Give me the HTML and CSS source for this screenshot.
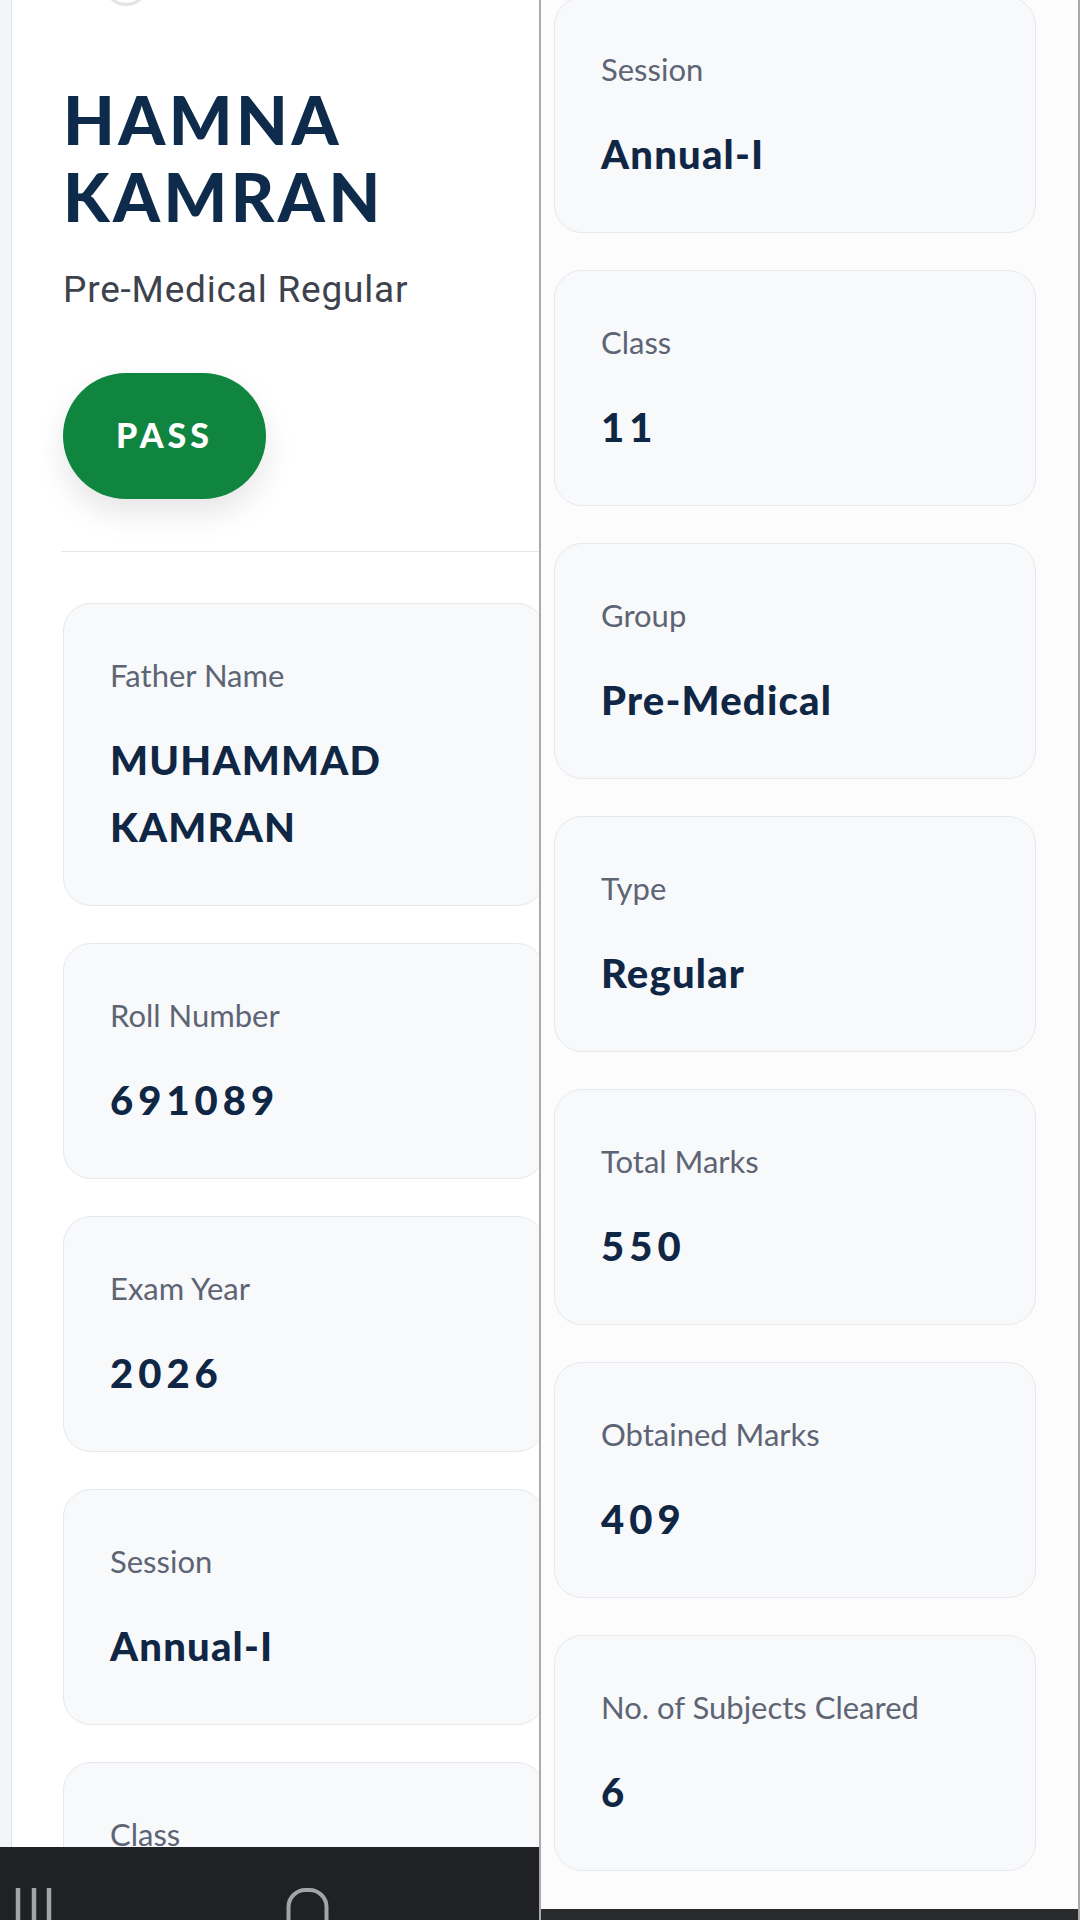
FILE: index.html
```html
<!DOCTYPE html>
<html>
<head>
<meta charset="utf-8">
<link rel="stylesheet" href="styles.css">
</head>
<body>
<div class="screen">
  <section class="left">
    <div class="sheet">
      <div class="avatar"></div>
      <h1 class="name">HAMNA<br>KAMRAN</h1>
      <p class="subtitle">Pre-Medical Regular</p>
      <div class="badge">PASS</div>
      <hr class="rule">
      <div class="cards">
        <div class="card"><div class="label">Father Name</div><div class="value">MUHAMMAD<br>KAMRAN</div></div>
        <div class="card"><div class="label">Roll Number</div><div class="value num">691089</div></div>
        <div class="card"><div class="label">Exam Year</div><div class="value num">2026</div></div>
        <div class="card"><div class="label">Session</div><div class="value">Annual-I</div></div>
        <div class="card"><div class="label">Class</div><div class="value num">11</div></div>
      </div>
    </div>
    <div class="navbar">
      <svg class="nav-recent" width="40" height="40" viewBox="0 0 40 40"><g stroke="#a3a4a6" stroke-width="4.5" fill="none"><line x1="3" y1="0" x2="3" y2="40"/><line x1="19" y1="0" x2="19" y2="40"/><line x1="34" y1="0" x2="34" y2="40"/></g></svg>
      <svg class="nav-home" width="44" height="40" viewBox="0 0 44 40"><rect x="2.5" y="2" width="38" height="50" rx="17" stroke="#a3a4a6" stroke-width="4" fill="none"/></svg>
    </div>
  </section>
  <section class="right">
    <div class="cards cards-right">
      <div class="card"><div class="label">Session</div><div class="value">Annual-I</div></div>
      <div class="card"><div class="label">Class</div><div class="value num">11</div></div>
      <div class="card"><div class="label">Group</div><div class="value">Pre-Medical</div></div>
      <div class="card"><div class="label">Type</div><div class="value">Regular</div></div>
      <div class="card"><div class="label">Total Marks</div><div class="value num">550</div></div>
      <div class="card"><div class="label">Obtained Marks</div><div class="value num">409</div></div>
      <div class="card"><div class="label">No. of Subjects Cleared</div><div class="value num">6</div></div>
    </div>
    <div class="rbar"></div>
  </section>
</div>
</body>
</html>
```
FILE: styles.css
```css
html, body {
  margin: 0;
  padding: 0;
  width: 1080px;
  height: 1920px;
  overflow: hidden;
  background: #ffffff;
}
.screen {
  display: flex;
  width: 1080px;
  height: 1920px;
}
.left {
  position: relative;
  width: 539px;
  height: 1920px;
  overflow: hidden;
  background: #f3f5f6;
  padding-left: 11px;
  box-sizing: border-box;
}
.sheet {
  background: #ffffff;
  border-left: 1px solid #dde6e6;
  height: 100%;
  padding-left: 51px;
  box-sizing: border-box;
}
.avatar {
  width: 40px;
  height: 40px;
  border-radius: 50%;
  border: 3px solid #e3e4e6;
  margin: -40px 0 0 40px;
}
.name {
  margin: 75px 0 0 0;
  font-family: "Lato", sans-serif;
  font-weight: 900;
  font-size: 67px;
  line-height: 77px;
  letter-spacing: 3.5px;
  color: #0f2b4c;
}
.subtitle {
  margin: 33px 0 0 0;
  font-family: "Roboto", sans-serif;
  font-size: 37px;
  line-height: 43px;
  letter-spacing: 0.8px;
  color: #3d424d;
}
.badge {
  margin-top: 62px;
  width: 203px;
  height: 126px;
  border-radius: 63px;
  background: #0f8540;
  box-shadow: 0 14px 30px rgba(0, 0, 0, 0.10);
  display: flex;
  align-items: center;
  justify-content: center;
  font-family: "Lato", sans-serif;
  font-weight: 900;
  font-size: 34px;
  letter-spacing: 4px;
  color: #ffffff;
  padding-bottom: 4px;
  box-sizing: border-box;
}
.rule {
  margin: 52px 0 0 -2px;
  border: 0;
  border-top: 1px solid #e4e6ea;
  height: 0;
}
.cards {
  display: flex;
  flex-direction: column;
  gap: 37px;
  margin-top: 51px;
  width: 482px;
}
.card {
  background: #f8f9fb;
  border: 1px solid #e6e8ec;
  border-radius: 28px;
  padding: 52px 46px 44px 46px;
  box-sizing: border-box;
}
.label {
  font-family: "Lato", sans-serif;
  font-size: 31px;
  line-height: 38px;
  color: #5d6575;
}
.value {
  margin-top: 33px;
  font-family: "Lato", sans-serif;
  font-weight: 900;
  font-size: 40px;
  line-height: 67px;
  letter-spacing: 1.2px;
  color: #0f2744;
}
.value.num {
  letter-spacing: 5px;
}
.navbar {
  position: absolute;
  left: 0;
  bottom: 0;
  width: 100%;
  height: 73px;
  background: #202124;
}
.nav-recent {
  position: absolute;
  left: 15px;
  top: 41px;
}
.nav-home {
  position: absolute;
  left: 286px;
  top: 41px;
}
.right {
  position: relative;
  width: 541px;
  height: 1920px;
  overflow: hidden;
  background: #fcfcfd;
  border-left: 2px solid #aaaaaa;
  border-right: 2px solid #a9a9a9;
  box-sizing: border-box;
  padding-left: 13px;
}
.cards-right {
  margin-top: -3px;
}
.rbar {
  position: absolute;
  left: 0;
  bottom: 0;
  width: 100%;
  height: 11px;
  background: #2a2b2e;
}
```
